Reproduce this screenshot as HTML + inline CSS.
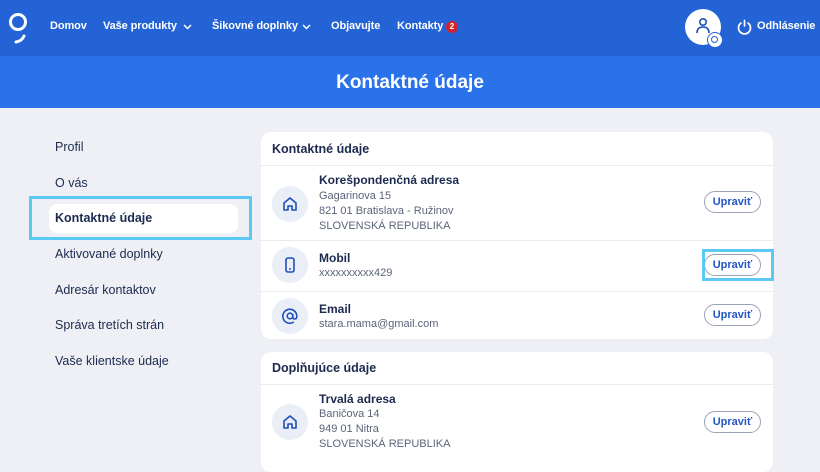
<!DOCTYPE html>
<html><head><meta charset="utf-8"><style>
*{box-sizing:border-box;margin:0;padding:0}
body{width:820px;height:455px;overflow:hidden;background:#eef0f5;font-family:"Liberation Sans",sans-serif;color:#1b2a4e;position:relative}
.hdr{position:absolute;left:0;top:0;width:820px;height:56px;background:#2463d5;color:#fff;font-size:11px;font-weight:bold}
.hdr span{position:absolute;top:20px;letter-spacing:-0.1px}
.hdr svg.ch{position:absolute;top:24px}
.ban{position:absolute;left:0;top:56px;width:820px;height:52px;background:#2a72e9;color:#fff;font-size:19px;font-weight:bold;text-align:center;line-height:54px}
.nav{position:absolute;left:55px;font-size:12.5px}
.card{position:absolute;left:261px;width:512px;background:#fff;border-radius:10px}
.ct{position:absolute;left:11px;font-size:12.5px;font-weight:bold}
.hr{position:absolute;left:0;width:512px;height:1px;background:#e8eaef}
.ic{position:absolute;left:11px;width:36px;height:36px;border-radius:50%;background:#e9eef7}
.ic svg{position:absolute;left:9px;top:9px}
.t{position:absolute;left:58px;font-size:12px;font-weight:bold}
.s{position:absolute;left:58px;font-size:11px;color:#5b6478;line-height:15px}
.btn{position:absolute;left:443px;width:57px;height:22px;border:1.5px solid #9aa3b5;border-radius:11px;font-size:11px;font-weight:bold;color:#2355c4;display:flex;align-items:center;justify-content:center}
.hl{position:absolute;border:3px solid #5ec8f5}
</style></head><body>
<div class="hdr">
<svg style="position:absolute;left:7px;top:12px" width="22" height="32" viewBox="0 0 22 32"><circle cx="11" cy="10" r="7.5" fill="none" stroke="#fff" stroke-width="3"/><path d="M17 24 Q15 29 9 30" fill="none" stroke="#fff" stroke-width="3" stroke-linecap="round"/></svg>
<span style="left:50px">Domov</span>
<span style="left:103px">Vaše produkty</span>
<svg class="ch" style="left:183px" width="9" height="6" viewBox="0 0 9 6"><path d="M1 1l3.5 3.5L8 1" fill="none" stroke="#fff" stroke-width="1.5"/></svg>
<span style="left:212px">Šikovné doplnky</span>
<svg class="ch" style="left:302px" width="9" height="6" viewBox="0 0 9 6"><path d="M1 1l3.5 3.5L8 1" fill="none" stroke="#fff" stroke-width="1.5"/></svg>
<span style="left:331px">Objavujte</span>
<span style="left:397px">Kontakty</span>
<div style="position:absolute;left:446px;top:21px;width:12px;height:12px;border-radius:6px;background:#d4212d;font-size:8px;text-align:center;line-height:12px">2</div>
<div style="position:absolute;left:685px;top:9px;width:36px;height:36px;border-radius:50%;background:#fff"><svg style="position:absolute;left:10px;top:8px" width="16" height="18" viewBox="0 0 16 18"><circle cx="8" cy="5" r="3.2" fill="none" stroke="#1e4fb8" stroke-width="1.6"/><path d="M2 16 Q2 10 8 10 Q14 10 14 16" fill="none" stroke="#1e4fb8" stroke-width="1.6"/></svg></div>
<div style="position:absolute;left:707px;top:32px;width:16px;height:16px;border-radius:50%;background:#fff;border:1.5px solid #2463d5"><div style="position:absolute;left:3px;top:3px;width:7px;height:7px;border-radius:50%;border:1.5px solid #2463d5"></div></div>
<svg style="position:absolute;left:737px;top:19px" width="15" height="16" viewBox="0 0 15 16"><path d="M4 4 A6 6 0 1 0 11 4" fill="none" stroke="#fff" stroke-width="1.7" stroke-linecap="round"/><path d="M7.5 1.5V7" stroke="#fff" stroke-width="1.7" stroke-linecap="round"/></svg>
<span style="left:757px">Odhlásenie</span>
</div>
<div class="ban">Kontaktné údaje</div>
<div class="nav" style="top:140px">Profil</div>
<div class="nav" style="top:176px">O vás</div>
<div style="position:absolute;left:49px;top:204px;width:189px;height:29px;background:#fff;border-radius:8px"></div>
<div class="nav" style="top:211px;font-weight:bold">Kontaktné údaje</div>
<div class="hl" style="left:29px;top:196px;width:223px;height:44px"></div>
<div class="nav" style="top:247px">Aktivované doplnky</div>
<div class="nav" style="top:283px">Adresár kontaktov</div>
<div class="nav" style="top:318px">Správa tretích strán</div>
<div class="nav" style="top:354px">Vaše klientske údaje</div>

<div class="card" style="top:132px;height:207px">
<div class="ct" style="top:10px">Kontaktné údaje</div>
<div class="hr" style="top:33px"></div>
<div class="ic" style="top:54px"><svg width="18" height="18" viewBox="0 0 18 18"><path d="M3 8 L9 3 L15 8 V15 H11 V11 H7 V15 H3 Z" fill="none" stroke="#1e4fb8" stroke-width="1.6" stroke-linejoin="round"/></svg></div>
<div class="t" style="top:41px">Korešpondenčná adresa</div>
<div class="s" style="top:57px">Gagarinova 15<br>821 01 Bratislava - Ružinov<br>SLOVENSKÁ REPUBLIKA</div>
<div class="btn" style="top:59px">Upraviť</div>
<div class="hr" style="top:108px"></div>
<div class="ic" style="top:115px"><svg width="18" height="18" viewBox="0 0 18 18"><rect x="5" y="2" width="8" height="14" rx="2" fill="none" stroke="#1e4fb8" stroke-width="1.6"/><path d="M8 13h2" stroke="#1e4fb8" stroke-width="1.4"/></svg></div>
<div class="t" style="top:119px">Mobil</div>
<div class="s" style="top:134px">xxxxxxxxxx429</div>
<div class="btn" style="top:122px">Upraviť</div>
<div class="hr" style="top:159px"></div>
<div class="ic" style="top:166px"><svg width="18" height="18" viewBox="0 0 18 18"><circle cx="9" cy="9" r="2.8" fill="none" stroke="#1e4fb8" stroke-width="1.6"/><path d="M11.8 7v3q0 2 2 2t2-3a7 7 0 1 0-3 6" fill="none" stroke="#1e4fb8" stroke-width="1.6"/></svg></div>
<div class="t" style="top:170px">Email</div>
<div class="s" style="top:185px">stara.mama@gmail.com</div>
<div class="btn" style="top:172px">Upraviť</div>
</div>
<div class="hl" style="left:702px;top:249px;width:72px;height:32px"></div>

<div class="card" style="top:352px;height:120px">
<div class="ct" style="top:9px">Doplňujúce údaje</div>
<div class="hr" style="top:32px"></div>
<div class="ic" style="top:52px"><svg width="18" height="18" viewBox="0 0 18 18"><path d="M3 8 L9 3 L15 8 V15 H11 V11 H7 V15 H3 Z" fill="none" stroke="#1e4fb8" stroke-width="1.6" stroke-linejoin="round"/></svg></div>
<div class="t" style="top:40px">Trvalá adresa</div>
<div class="s" style="top:55px">Baničova 14<br>949 01 Nitra<br>SLOVENSKÁ REPUBLIKA</div>
<div class="btn" style="top:59px">Upraviť</div>
</div>
</body></html>
